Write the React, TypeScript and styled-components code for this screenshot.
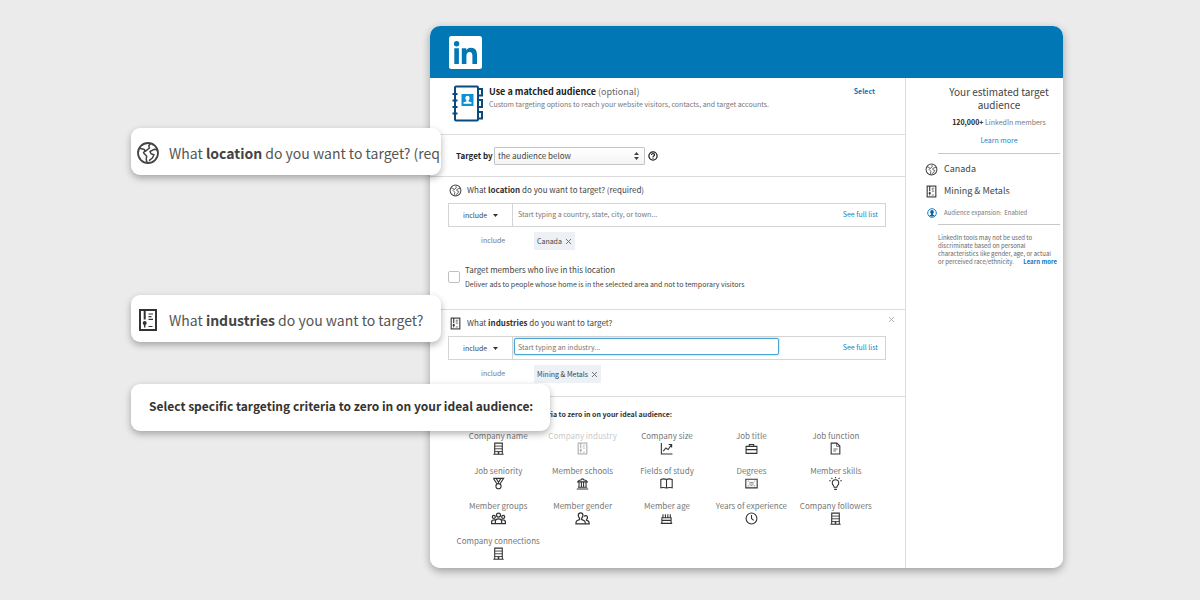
import React from "react";
import styled, { createGlobalStyle, css } from "styled-components";

const GlobalStyle = createGlobalStyle`
  *, *::before, *::after { box-sizing: border-box; }
  body { margin: 0; background: #ebebeb; }
  body, button, input, select {
    font-family: "Noto Sans CJK SC", "Noto Sans", sans-serif;
  }
  p, h1, h2, h3, ul { margin: 0; padding: 0; font-weight: 400; }
  ul { list-style: none; }
  svg { display: block; flex: none; }
`;

const Page = styled.div`
  display: flex;
  min-height: 100vh;
  padding: 26px 137px 32px 131px;
  background: #ebebeb;
`;

const Stage = styled.main`
  position: relative;
  display: flex;
  flex: 1;
  padding-left: 299px;
`;

const Card = styled.section`
  display: flex;
  flex-direction: column;
  flex: 1;
  min-width: 0;
  overflow: hidden;
  border-radius: 10px;
  background: #fff;
`;

const CardShadow = styled.div`
  display: flex;
  flex: 1;
  min-width: 0;
  border-radius: 10px;
  box-shadow: 0 3px 9px rgba(0, 0, 0, 0.33);
`;

const Header = styled.header`
  display: flex;
  align-items: center;
  height: 52px;
  padding: 0 19px;
  background: #0277b5;
`;

const Body = styled.div`
  display: grid;
  grid-template-columns: minmax(0, 1fr) 157px;
  flex: 1;
`;

const Main = styled.div`
  border-right: 1px solid #dcdcdc;
`;

const Section = styled.section<{ $h?: number }>`
  min-height: ${(p) => p.$h ?? 0}px;
  padding: 0 19px 0 18px;
  border-bottom: 1px solid #dcdcdc;
  &:last-child { border-bottom: 0; }
`;

const Link = styled.a<{ $bold?: boolean }>`
  color: ${(p) => (p.$bold ? "#0a78bd" : "#1486c8")};
  font-size: 7px;
  line-height: 10px;
  font-weight: ${(p) => (p.$bold ? 700 : 400)};
  text-decoration: none;
  white-space: nowrap;
`;

const Matched = styled.div`
  display: flex;
  align-items: flex-start;
  padding: 7px 11px 12px 4px;
`;

const MatchedText = styled.div`
  flex: 1;
  min-width: 0;
  padding-left: 5px;
`;

const MatchedTitle = styled.h2`
  color: #666;
  font-size: 9px;
  line-height: 14px;
  b { color: #222; }
`;

const MatchedNote = styled.p`
  color: #777;
  font-size: 7px;
  line-height: 10px;
`;

const SelectLink = styled.div`
  display: flex;
  padding-top: 1px;
`;

const TargetRow = styled.div`
  display: flex;
  align-items: center;
  height: 41px;
  padding-left: 8px;
`;

const TargetLabel = styled.label`
  width: 38px;
  color: #222;
  font-size: 8px;
  font-weight: 700;
  line-height: 12px;
  white-space: nowrap;
`;

const SelectWrap = styled.span<{ $w: number; $pad: number }>`
  display: grid;
  grid-template-columns: minmax(0, 1fr);
  align-items: center;
  width: ${(p) => p.$w}px;
  flex: none;
  > * { grid-area: 1 / 1; }
  > svg {
    justify-self: end;
    margin-right: ${(p) => p.$pad}px;
    pointer-events: none;
  }
`;

const Select = styled.select<{ $boxed?: boolean }>`
  width: 100%;
  height: ${(p) => (p.$boxed ? 18 : 22)}px;
  padding: ${(p) => (p.$boxed ? "0 3px" : "0 14px")};
  border: ${(p) => (p.$boxed ? "1px solid #c4c4c4" : "0")};
  border-radius: 1px;
  background: ${(p) => (p.$boxed ? "linear-gradient(#fff, #f4f4f4)" : "transparent")};
  color: #444;
  font-size: ${(p) => (p.$boxed ? 8 : 7)}px;
  line-height: 14px;
  appearance: none;
  outline: 0;
`;

const HelpButton = styled.button`
  margin-left: 3px;
  padding: 0;
  border: 0;
  background: none;
`;

const Question = styled.h3`
  display: flex;
  align-items: center;
  gap: 5px;
  height: 26px;
  color: #444;
  font-size: 8px;
  line-height: 14px;
  b { color: #333; }
`;

const QuestionRow = styled.div`
  display: flex;
  justify-content: space-between;
  align-items: flex-start;
  > h3 { padding-left: 1px; }
`;

const PlainButton = styled.button<{ $top?: number; $pull?: number }>`
  margin: ${(p) => p.$top ?? 0}px ${(p) => p.$pull ?? 0}px 0 0;
  padding: 0;
  border: 0;
  background: none;
  color: inherit;
`;

const FieldRow = styled.div`
  display: flex;
  align-items: center;
  height: 24px;
  border: 1px solid #d4d4d4;
  background: #fff;
`;

const Field = styled.div`
  display: flex;
  align-items: center;
  justify-content: space-between;
  flex: 1;
  align-self: stretch;
  min-width: 0;
  padding: 0 7px 3px 1px;
  border-left: 1px solid #d4d4d4;
`;

const Input = styled.input<{ $focused?: boolean }>`
  width: 265px;
  height: 17px;
  padding: 0 3px;
  border: 1px solid transparent;
  border-radius: 2px;
  background: #fff;
  color: #555;
  font-size: 7px;
  line-height: 10px;
  outline: 0;
  &::placeholder { color: #777; opacity: 1; }
  ${(p) =>
    p.$focused &&
    css`
      border-color: #4aa3d0;
      box-shadow: 0 0 2px #6fbbe0;
    `}
`;

const Chips = styled.div`
  display: flex;
  align-items: flex-start;
  padding: 5px 0 0 33px;
  color: #777;
  font-size: 7px;
  line-height: 10px;
`;

const ChipLabel = styled.span`
  width: 53px;
  padding-top: 3px;
`;

const Chip = styled.span`
  display: flex;
  align-items: center;
  gap: 4px;
  height: 18px;
  padding: 0 4px 0 3px;
  background: #edf0f4;
  color: #444;
`;

const CheckRow = styled.label`
  display: flex;
  align-items: center;
  gap: 5px;
  padding-top: 13px;
  color: #444;
  font-size: 8px;
  line-height: 14px;
`;

const CheckText = styled.span`
  display: flex;
  flex-direction: column;
  small { font-size: 7px; }
`;

const Checkbox = styled.input`
  width: 12px;
  height: 12px;
  margin: 0;
  border: 1px solid #c0c0c0;
  border-radius: 2px;
  background: #fff;
  appearance: none;
`;

const CriteriaTitle = styled.h3`
  padding-top: 10px;
  color: #333;
  font-size: 7px;
  font-weight: 700;
  line-height: 14px;
`;

const Criteria = styled.ul`
  display: grid;
  grid-template-columns: repeat(5, minmax(0, 1fr));
  row-gap: 9px;
  padding: 8px 8px 0;
`;

const Criterion = styled.button<{ $muted?: boolean }>`
  display: flex;
  flex-direction: column;
  align-items: center;
  width: 100%;
  padding: 0;
  border: 0;
  background: none;
  color: #333;
  opacity: ${(p) => (p.$muted ? 0.4 : 1)};
  font-size: 8px;
  line-height: 13px;
  white-space: nowrap;
  span { color: #777; }
`;

const Side = styled.aside`
  padding: 7px 3px 0 0;
  color: #444;
`;

const Summary = styled.div`
  display: flex;
  flex-direction: column;
  align-items: center;
  height: 69px;
  margin-left: 32px;
  border-bottom: 1px solid #c8c8c8;
  text-align: center;
`;

const SideTitle = styled.h2`
  font-size: 10px;
  line-height: 13px;
`;

const Members = styled.p`
  padding: 6px 0 8px;
  color: #777;
  font-size: 7px;
  line-height: 10px;
  b { color: #222; }
`;

const Facts = styled.ul`
  padding: 4px 0 0 19px;
`;

const Fact = styled.li<{ $small?: boolean }>`
  display: flex;
  align-items: center;
  gap: 6px;
  height: 22px;
  color: ${(p) => (p.$small ? "#777" : "#444")};
  font-size: ${(p) => (p.$small ? 6 : 9)}px;
  line-height: 14px;
  white-space: pre;
`;

const Legal = styled.p`
  margin-left: 32px;
  padding-top: 9px;
  border-top: 1px solid #c8c8c8;
  color: #666;
  font-size: 6px;
  line-height: 8px;
  white-space: nowrap;
  a { margin-left: 8px; font-size: 6px; line-height: 8px; }
`;

const Callout = styled.div<{ $top: number; $w: number; $strong?: boolean }>`
  position: absolute;
  top: ${(p) => p.$top}px;
  left: 0;
  display: flex;
  align-items: center;
  gap: 9px;
  width: ${(p) => p.$w}px;
  height: 47px;
  padding: ${(p) => (p.$strong ? "0 0 3px 18px" : "2px 0 0 5px")};
  overflow: hidden;
  border-radius: 9px;
  background: #fff;
  box-shadow: 0 3px 7px rgba(0, 0, 0, 0.3);
  color: ${(p) => (p.$strong ? "#333" : "#555")};
  font-size: ${(p) => (p.$strong ? 12 : 14)}px;
  font-weight: ${(p) => (p.$strong ? 700 : 400)};
  line-height: 20px;
  white-space: nowrap;
  b { color: #444; }
`;

const Globe = ({ size = 13 }: { size?: number }) => (
  <svg width={size} height={size} viewBox="0 0 24 24" fill="none" stroke="#444" strokeWidth={size > 20 ? 1.8 : 1.9} strokeLinejoin="round" aria-hidden="true">
    <circle cx="12" cy="12" r="10" />
    <path d="M3.800 7.200l4.400 1.300 1.300 1.700 4-3.200-.8-2 1.800-2.600M8.800 9.800l-1.300 2 3.200 3.400-.5 3.300 1 3.300M21.500 9l-3-.8-4.500 2.300 1 2.300 3 .9-1.600 3.300-3.400 2.700" strokeWidth="1.500" />
  </svg>
);

const Industry = ({ size = 13, color = "#333" }: { size?: number; color?: string }) => (
  <svg width={size} height={size} viewBox="0 0 24 24" fill="none" stroke={color} strokeWidth="2" aria-hidden="true">
    <rect x="4" y="2" width="16" height="20" />
    <path d="M8.700 2v9.500" strokeWidth="2" />
    <circle cx="8.700" cy="15" r="2" fill={color} stroke="none" />
    <path d="M8.700 15v4.500" strokeWidth="1.500" />
    <path d="M12.500 6h4.500M12.500 8.700h3M12.500 11.400h4.500M12.500 18.500h4" strokeWidth="1.200" />
  </svg>
);

const Caret = () => (
  <svg width="5" height="3" viewBox="0 0 5 3" aria-hidden="true">
    <path d="M0 0h5L2.500 3z" fill="#333" />
  </svg>
);

const UpDown = () => (
  <svg width="5" height="8" viewBox="0 0 5 8" fill="#444" aria-hidden="true">
    <path d="M2.500 0L5 3H0zM2.500 8L0 5h5z" />
  </svg>
);

const Cross = ({ color = "#666" }: { color?: string }) => (
  <svg width="5" height="5" viewBox="0 0 5 5" stroke={color} strokeWidth="0.900" aria-hidden="true">
    <path d="M0 0l5 5M5 0L0 5" />
  </svg>
);

const Logo = () => (
  <svg width="33" height="33" viewBox="0 0 33 33" role="img" aria-label="LinkedIn">
    <rect width="33" height="33" rx="2.500" fill="#fff" />
    <g fill="#0277b5">
      <circle cx="7.600" cy="7.800" r="2.700" />
      <path d="M5.300 12.200h4.600V28H5.300zM12.800 12.200h4.400v2.200c.8-1.500 2.400-2.600 4.600-2.600 4.700 0 6.200 2.900 6.200 7.300V28h-4.600v-7.900c0-2.200-.5-4-2.800-4s-3.200 1.700-3.200 4V28h-4.600z" />
    </g>
  </svg>
);

const AddressBook = () => (
  <svg width="32" height="37" viewBox="0 0 32 37" fill="none" aria-hidden="true">
    <g stroke="#0b4a7c" strokeWidth="2">
      <rect x="3" y="1.500" width="23" height="34" rx="1" />
      <path d="M26 4h4v6.500h-4M26 15h4v7h-4M26 27h4v6.500h-4" />
      <path d="M0.500 9h5M0.500 15.500h5M0.500 22h5M0.500 28.500h5" />
    </g>
    <rect x="9.500" y="9" width="12" height="12" fill="#0c91d4" />
    <path d="M15.500 10.800c1.400 0 2.100 1 2.100 2.200s-.5 1.900-1 2.400v1.100l2.900.8v1.500h-8v-1.500l2.900-.8v-1.100c-.5-.5-1-1.200-1-2.400s.7-2.200 2.100-2.200z" fill="#fff" />
  </svg>
);

const Help = () => (
  <svg width="10" height="10" viewBox="0 0 20 20" fill="none" stroke="#222" aria-hidden="true">
    <circle cx="10" cy="10" r="8.200" strokeWidth="2.600" />
    <path d="M7 8c0-4 6.200-3.600 6.200-.3 0 2.100-3.200 2.100-3.200 4.300M10 13.200v2.300" strokeWidth="2.400" />
  </svg>
);

const Person = () => (
  <svg width="13" height="10" viewBox="0 0 26 20" fill="none" aria-hidden="true">
    <circle cx="14" cy="10" r="8.600" stroke="#1680c2" strokeWidth="2" />
    <path d="M14 4c2.500 0 3.600 1.800 3.600 3.800s-1 3.200-1.800 3.800v1.800l3.700 1.300c-1.300 1.600-3.300 2.500-5.500 2.500s-4.200-.9-5.500-2.500l3.700-1.300v-1.800c-.8-.6-1.800-1.800-1.800-3.800S11.500 4 14 4z" fill="#0b66a5" />
  </svg>
);

const paths: Record<string, React.ReactNode> = {
  building: (
    <>
      <path d="M5 22.500V2h14v20.500M2.500 22.500h19" />
      <path d="M5 7.500h14M5 12.500h14M5 17.500h14" strokeWidth="1.600" />
      <path d="M12 18v4" strokeWidth="3" />
    </>
  ),
  chart: <path d="M2.500 2v20H23M6 17l5-6 4 3 6-9M16 4.500h5.500V10" />,
  briefcase: <path d="M2 8h20v13H2zM2 14h20M8 8V4.500h8V8" />,
  page: (
    <>
      <path d="M4 2h10.500L20 7.500V22H4z" />
      <path d="M14 2v6h6M8 13h8M8 16.500h5" strokeWidth="1.300" />
    </>
  ),
  medal: (
    <>
      <path d="M2.500 2.500h19L15 12.500M2.500 2.500l6.500 10M8 3l4 7 4-7" />
      <circle cx="12" cy="17" r="4.800" />
    </>
  ),
  school: <path d="M3 9c1-3 5-3 7-4 .5-2 3.500-2 4 0 2 1 6 1 7 4zM5.500 9v10M10 9v10M14 9v10M18.500 9v10M3.500 19h17M1.500 22h21" />,
  book: <path d="M12 4.500c-3-1.200-7-1.200-10.500 0V20c3.500-.8 7.500-.8 10.500.5 3-1.300 7-1.300 10.500-.5V4.500c-3.500-1.200-7.500-1.200-10.500 0zM12 4.500v16" />,
  degree: (
    <>
      <path d="M1.500 4h21v16h-21z" />
      <path d="M5 7.500h2M17 7.500h2M5 16.500h3M16 16.500h3M8 10h8M7.500 13h9M10 16h4" strokeWidth="1" />
    </>
  ),
  bulb: <path d="M9.500 19c0-3-3.500-4-3.500-8a6 6 0 0112 0c0 4-3.500 5-3.500 8zM9.500 22.800h5M12 0v2.500M4.500 1.500l1.700 2M19.500 1.500l-1.700 2M.5 6.500l2.500 1M23.500 6.500l-2.500 1" />,
  groups: (
    <>
      <circle cx="12" cy="6.500" r="3.200" />
      <circle cx="4.500" cy="9.500" r="2.400" />
      <circle cx="19.500" cy="9.500" r="2.400" />
      <path d="M7 20v-4c0-2 2-3.500 5-3.500s5 1.500 5 3.500v4zM7 20H1v-3c0-2 2-3 4.500-3H7M17 20h6v-3c0-2-2-3-4.500-3H17" />
    </>
  ),
  gender: (
    <>
      <path d="M9 3c2.500 0 3.700 1.800 3.700 4.200s-1.300 3.600-2 4.400v2l4.300 2c1 .6 1.500 2 1.500 4.900H1.500c0-2.900.5-4.300 1.500-4.900l4.300-2v-2c-.7-.8-2-2-2-4.400S6.500 3 9 3z" />
      <path d="M15 9c.5-2.200 5-2.200 5 1.200 0 2-1 2.800-1.500 3.300v1.300l3 1.400c.8.500 1.200 1.600 1.200 4.300H17" />
    </>
  ),
  cake: <path d="M3.500 10.500h17V21h-17zM3.500 15.500h17M1.500 21h21M5.500 10.500V4M10 10.500V4M14.500 10.500V4M19 10.500V4" />,
  clock: (
    <>
      <circle cx="12" cy="12" r="10" />
      <path d="M12 5.500V12l4 3.500" />
    </>
  ),
};

const CriterionIcon = ({ name }: { name: string }) =>
  name === "industry" ? (
    <Industry size={13} />
  ) : (
    <svg width={name === "groups" || name === "gender" ? 15 : 13} height="13" viewBox="0 0 24 24" preserveAspectRatio="xMidYMid slice" fill="none" stroke="currentColor" strokeWidth="2" aria-hidden="true">
      {paths[name]}
    </svg>
  );

const criteria: [string, string][] = [
  ["Company name", "building"],
  ["Company industry", "industry"],
  ["Company size", "chart"],
  ["Job title", "briefcase"],
  ["Job function", "page"],
  ["Job seniority", "medal"],
  ["Member schools", "school"],
  ["Fields of study", "book"],
  ["Degrees", "degree"],
  ["Member skills", "bulb"],
  ["Member groups", "groups"],
  ["Member gender", "gender"],
  ["Member age", "cake"],
  ["Years of experience", "clock"],
  ["Company followers", "building"],
  ["Company connections", "building"],
];

interface PickerProps {
  id: string;
  placeholder: string;
  chip: string;
  focused?: boolean;
}

const Picker = ({ id, placeholder, chip, focused }: PickerProps) => (
  <>
    <FieldRow>
      <SelectWrap $w={63} $pad={14}>
        <Select aria-label={`${id} rule`}>
          <option>include</option>
        </Select>
        <Caret />
      </SelectWrap>
      <Field>
        <Input aria-label={id} placeholder={placeholder} $focused={focused} />
        <Link href="#">See full list</Link>
      </Field>
    </FieldRow>
    <Chips>
      <ChipLabel>include</ChipLabel>
      <Chip>
        {chip}
        <PlainButton type="button" aria-label={`Remove ${chip}`}>
          <Cross />
        </PlainButton>
      </Chip>
    </Chips>
  </>
);

export default function App() {
  return (
    <Page>
      <GlobalStyle />
      <Stage>
        <CardShadow>
          <Card>
            <Header>
              <Logo />
            </Header>
            <Body>
              <Main>
                <Section $h={57}>
                  <Matched>
                    <AddressBook />
                    <MatchedText>
                      <MatchedTitle>
                        <b>Use a matched audience</b> (optional)
                      </MatchedTitle>
                      <MatchedNote>
                        Custom targeting options to reach your website visitors, contacts, and target accounts.
                      </MatchedNote>
                    </MatchedText>
                    <SelectLink>
                      <Link href="#" $bold>Select</Link>
                    </SelectLink>
                  </Matched>
                </Section>
                <Section $h={42}>
                  <TargetRow>
                    <TargetLabel htmlFor="target-by">Target by</TargetLabel>
                    <SelectWrap $w={151} $pad={6}>
                      <Select id="target-by" $boxed>
                        <option>the audience below</option>
                      </Select>
                      <UpDown />
                    </SelectWrap>
                    <HelpButton type="button" aria-label="Help">
                      <Help />
                    </HelpButton>
                  </TargetRow>
                </Section>
                <Section $h={133}>
                  <QuestionRow>
                    <Question>
                      <Globe />
                      <span>What <b>location</b> do you want to target? (required)</span>
                    </Question>
                  </QuestionRow>
                  <Picker id="Location" placeholder="Start typing a country, state, city, or town..." chip="Canada" />
                  <CheckRow>
                    <Checkbox type="checkbox" />
                    <CheckText>
                      <span>Target members who live in this location</span>
                      <small>Deliver ads to people whose home is in the selected area and not to temporary visitors</small>
                    </CheckText>
                  </CheckRow>
                </Section>
                <Section $h={87}>
                  <QuestionRow>
                    <Question>
                      <Industry />
                      <span>What <b>industries</b> do you want to target?</span>
                    </Question>
                    <PlainButton type="button" aria-label="Close" $top={7} $pull={-8}>
                      <Cross color="#aaa" />
                    </PlainButton>
                  </QuestionRow>
                  <Picker id="Industry" placeholder="Start typing an industry..." chip="Mining &amp; Metals" focused />
                </Section>
                <Section>
                  <CriteriaTitle>
                    Select specific targeting criteria to zero in on your ideal audience:
                  </CriteriaTitle>
                  <Criteria>
                    {criteria.map(([label, icon]) => (
                      <li key={label}>
                        <Criterion type="button" $muted={icon === "industry"}>
                          <span>{label}</span>
                          <CriterionIcon name={icon} />
                        </Criterion>
                      </li>
                    ))}
                  </Criteria>
                </Section>
              </Main>
              <Side>
                <Summary>
                  <SideTitle>
                    Your estimated target
                    <br />
                    audience
                  </SideTitle>
                  <Members>
                    <b>120,000+</b> LinkedIn members
                  </Members>
                  <Link href="#">Learn more</Link>
                </Summary>
                <Facts>
                  <Fact><Globe />Canada</Fact>
                  <Fact><Industry />Mining &amp; Metals</Fact>
                  <Fact $small><Person />{"Audience expansion:  Enabled"}</Fact>
                </Facts>
                <Legal>
                  LinkedIn tools may not be used to
                  <br />
                  discriminate based on personal
                  <br />
                  characteristics like gender, age, or actual
                  <br />
                  or perceived race/ethnicity. <Link href="#" $bold>Learn more</Link>
                </Legal>
              </Side>
            </Body>
          </Card>
        </CardShadow>
        <Callout $top={102} $w={310}>
          <Globe size={24} />
          <span>What <b>location</b> do you want to target? (required)</span>
        </Callout>
        <Callout $top={269} $w={310}>
          <Industry size={24} />
          <span>What <b>industries</b> do you want to target?</span>
        </Callout>
        <Callout $top={358} $w={419} $strong>
          Select specific targeting criteria to zero in on your ideal audience:
        </Callout>
      </Stage>
    </Page>
  );
}
